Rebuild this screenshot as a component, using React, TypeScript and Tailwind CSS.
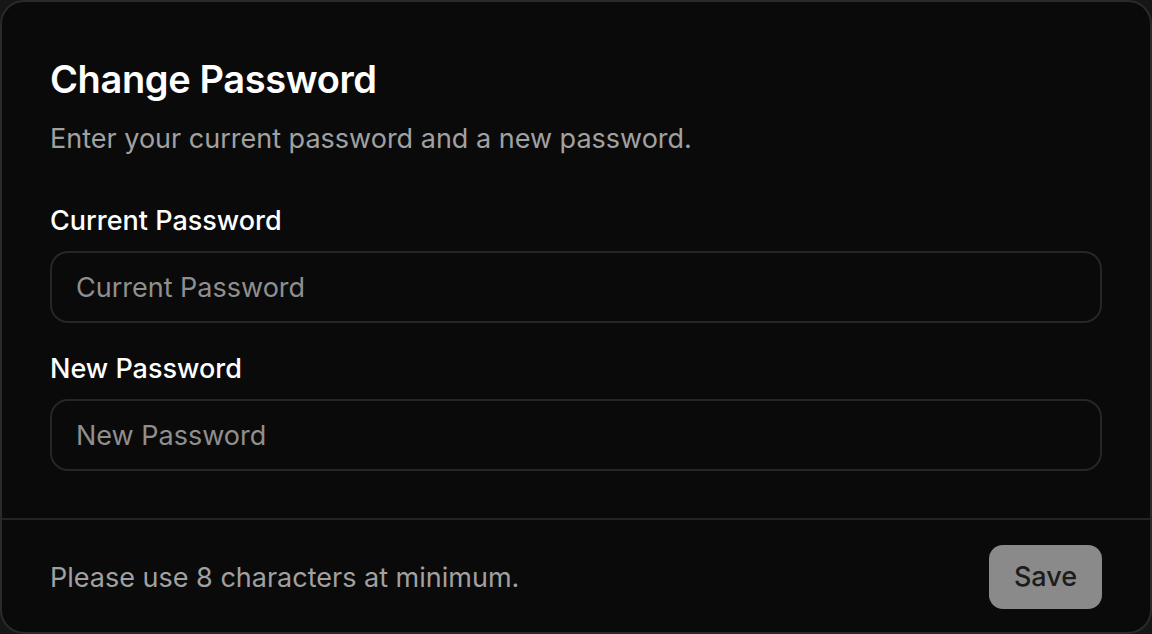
export default function App() {
  return (
    <div className="w-[1152px] h-[634px] bg-[#161616]" style={{ fontFamily: 'Inter, "Noto Sans", sans-serif' }}>
      <div className="w-full h-full rounded-[24px] border-2 border-[#2a2a2a] bg-[#0a0a0a] flex flex-col overflow-hidden">
        <div className="flex flex-col px-[48px] pt-[55px] pb-[47px] border-b-2 border-[#242424]">
          <h1 className="text-[38px] leading-[44px] font-semibold text-white tracking-[-0.01em]">Change Password</h1>
          <p className="mt-[18px] text-[27px] leading-[40px] text-[#a1a1a1]">Enter your current password and a new password.</p>
          <label className="mt-[42px] text-[27px] leading-[40px] font-medium text-white">Current Password</label>
          <input
            placeholder="Current Password"
            className="mt-[10px] h-[72px] rounded-[18px] border-2 border-[#262626] bg-transparent px-[24px] text-[27px] text-white placeholder:text-[#8f8f8f] outline-none"
          />
          <label className="mt-[26px] text-[27px] leading-[40px] font-medium text-white">New Password</label>
          <input
            placeholder="New Password"
            className="mt-[10px] h-[72px] rounded-[18px] border-2 border-[#262626] bg-transparent px-[24px] text-[27px] text-white placeholder:text-[#8f8f8f] outline-none"
          />
        </div>
        <div className="flex-1 flex items-center justify-between px-[48px] pt-[1px]">
          <p className="text-[27px] leading-[40px] text-[#a1a1a1] pt-[2px]">Please use 8 characters at minimum.</p>
          <button className="h-[64px] w-[113px] rounded-[14px] bg-[#8a8a8a] text-[27px] text-[#1c1c1c] font-medium pt-[2px]">Save</button>
        </div>
      </div>
    </div>
  );
}
